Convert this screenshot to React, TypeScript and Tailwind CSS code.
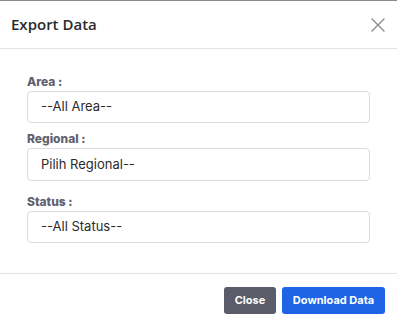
import React from "react";

function Field({ label, value, className = "", h = "h-[32px]" }: { label: string; value: string; className?: string; h?: string }) {
  return (
    <div className={className}>
      <div className="text-[12px] font-extrabold leading-[16px] text-[#5f6170]">{label}</div>
      <div className={`mt-[1px] flex ${h} items-center rounded-[4px] border border-[#d9dae3] bg-white pl-[13px] text-[13px] text-[#2b2b2b]`}>
        {value}
      </div>
    </div>
  );
}

export default function App() {
  return (
    <div className="h-[327px] w-[397px] overflow-hidden border-t border-[#8a8a8a] bg-white" style={{ fontFamily: "Inter, 'Noto Sans', sans-serif" }}>
      <div className="flex h-[48px] items-center justify-between border-b border-[#e3e3e3] pl-[11px] pr-[12px]">
        <div className="text-[15px] font-semibold text-[#2b2b2b]" style={{ fontFamily: "'Open Sans', Inter, sans-serif" }}>Export Data</div>
        <svg width="14" height="14" viewBox="0 0 14 14" className="ml-[1px]">
          <path d="M1 1 L13 13 M13 1 L1 13" stroke="#8a8a8a" strokeWidth="1.4" strokeLinecap="round" />
        </svg>
      </div>
      <div className="h-[225px] border-b border-[#e3e3e3] px-[27px] pt-[25px]">
        <Field label="Area :" value="--All Area--" />
        <Field label="Regional :" value="Pilih Regional--" className="mt-[8px]" h="h-[33px]" />
        <Field label="Status :" value="--All Status--" className="mt-[13px]" />
      </div>
      <div className="flex justify-end gap-[6px] pr-[12px] pt-[13px]">
        <button className="h-[27px] w-[52px] rounded-[3px] bg-[#5a5c69] text-[11px] font-bold text-white">Close</button>
        <button className="h-[27px] w-[103px] rounded-[3px] bg-[#1f63e6] text-[11px] font-bold text-white">Download Data</button>
      </div>
    </div>
  );
}
